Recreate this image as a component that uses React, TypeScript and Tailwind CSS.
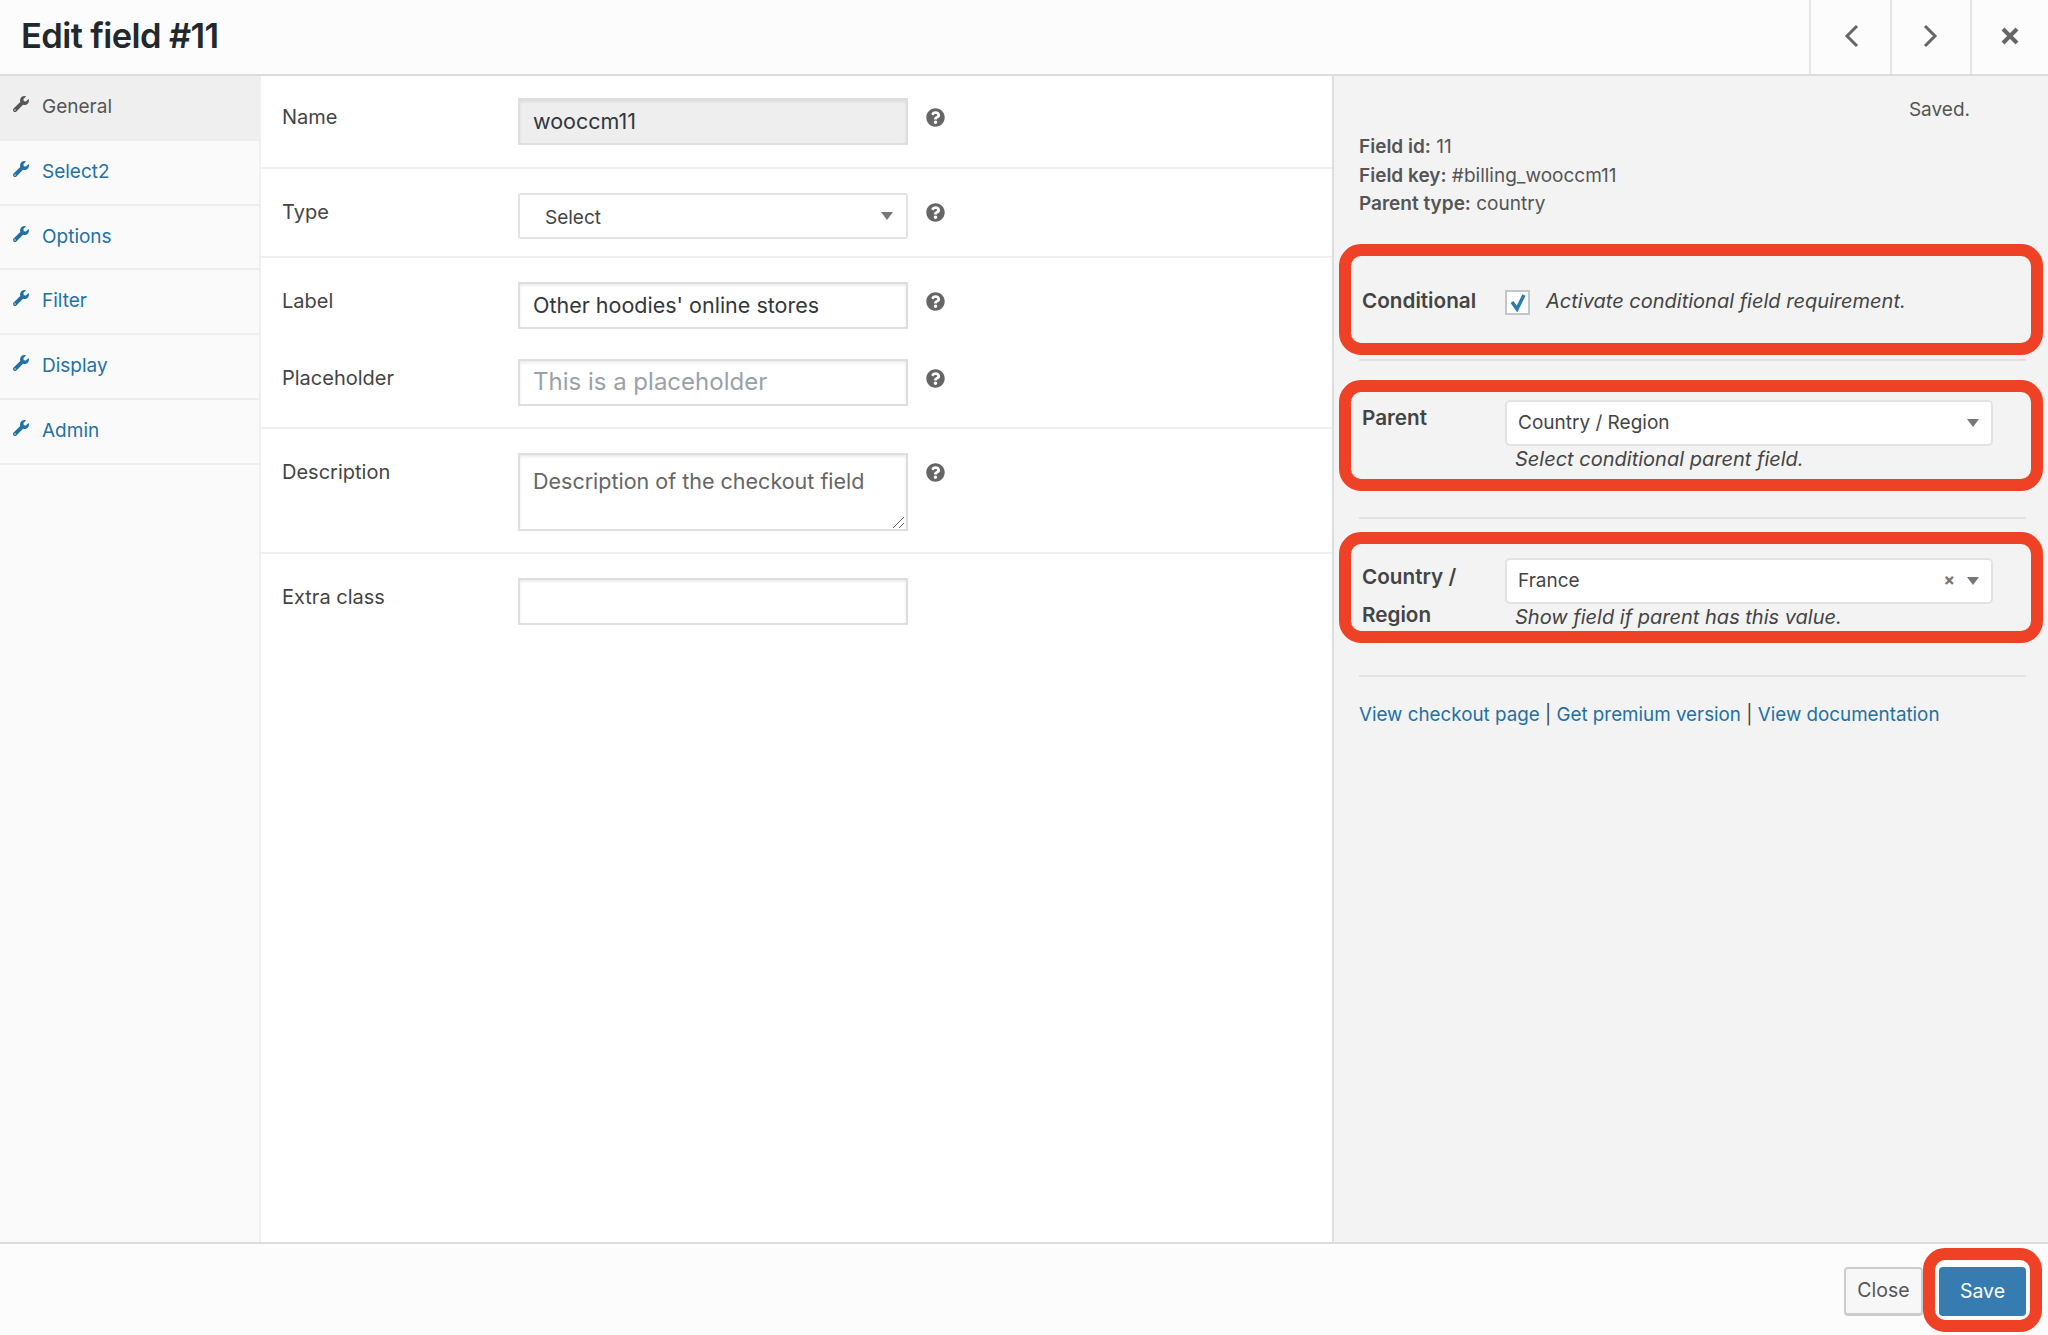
import { FaQuestionCircle, FaWrench } from "react-icons/fa";

const tabs = ["General", "Select2", "Options", "Filter", "Display", "Admin"];

function Help() {
  return (
    <div className="w-[20px] h-[39px] ml-[17px] flex items-center justify-center text-[#666]">
      <FaQuestionCircle size={19} />
    </div>
  );
}

function Label({ children }: { children: string }) {
  return <div className="w-[257px] pl-[21px] text-[20px] leading-[39px] text-[#444]">{children}</div>;
}

function Input({ value, className = "" }: { value?: string; className?: string }) {
  return (
    <div
      className={`w-[390px] h-[47px] border-2 border-[#dedede] shadow-[inset_0_2px_3px_rgba(0,0,0,0.08)] pl-[13px] text-[21.5px] leading-[42px] ${className}`}
    >
      {value}
    </div>
  );
}

function Arrow() {
  return <div className="w-0 h-0 border-x-[6px] border-x-transparent border-t-[8px] border-t-[#777]" />;
}

function RedBox({ className }: { className: string }) {
  return (
    <div className={`absolute border-[12px] border-[#ee4125] rounded-[22px] pointer-events-none ${className}`} />
  );
}

function ParentSelect({ value, clear }: { value: string; clear?: boolean }) {
  return (
    <div className="w-[488px] h-[46px] bg-white border-2 border-[#e2e2e2] rounded-[5px] flex items-center pl-[11px] pr-[12px] text-[19px] text-[#444]">
      <span className="flex-1 pt-[2px]">{value}</span>
      {clear && <span className="mr-[12px] text-[17px] font-bold text-[#777] leading-none">×</span>}
      <Arrow />
    </div>
  );
}

export default function App() {
  return (
    <div className="w-[2048px] h-[1335px] flex flex-col overflow-hidden bg-white font-['Inter',sans-serif] text-[19px] text-[#444]">
      <header className="h-[76px] shrink-0 flex justify-between bg-[#fcfcfc] border-b-2 border-[#dddddd]">
        <h1 className="pl-[21px] text-[34.5px] leading-[71px] font-semibold tracking-[-0.6px] text-[#23282d]">
          Edit field #11
        </h1>
        <div className="flex">
          <div className="w-[81px] pb-[3px] border-l-2 border-[#e6e6e6] flex items-center justify-center">
            <svg width="16" height="24" viewBox="0 0 16 24" fill="none" stroke="#666" strokeWidth="3">
              <path d="M14 2 L4 12 L14 22" />
            </svg>
          </div>
          <div className="w-[80px] pb-[3px] border-l-2 border-[#e6e6e6] flex items-center justify-center">
            <svg width="16" height="24" viewBox="0 0 16 24" fill="none" stroke="#666" strokeWidth="3">
              <path d="M2 2 L12 12 L2 22" />
            </svg>
          </div>
          <div className="w-[78px] pb-[3px] border-l-2 border-[#e6e6e6] flex items-center justify-center">
            <svg width="18" height="18" viewBox="0 0 18 18" fill="none" stroke="#666" strokeWidth="4">
              <path d="M2 2 L16 16 M16 2 L2 16" />
            </svg>
          </div>
        </div>
      </header>

      <main className="flex-1 flex min-h-0">
        <nav className="w-[261px] shrink-0 bg-[#fafafa] border-r-2 border-[#efefef]">
          {tabs.map((tab, i) => (
            <div
              key={tab}
              className={`h-[64.8px] flex items-start pl-[13px] pt-[20px] border-b-2 border-[#eeeeee] ${
                i === 0 ? "bg-[#efefef] text-[#555]" : "text-[#2271a5]"
              }`}
            >
              <FaWrench size={16} className="mr-[13px]" />
              <span className="leading-[24px] -mt-[1px]">{tab}</span>
            </div>
          ))}
        </nav>

        <section className="flex-1 bg-white">
          <div className="flex pt-[22px] h-[93px] border-b-2 border-[#f0f0f0]">
            <Label>Name</Label>
            <Input value="wooccm11" className="bg-[#eeeeee] text-[#32373c]" />
            <Help />
          </div>
          <div className="flex pt-[24px] h-[89px] border-b-2 border-[#f0f0f0]">
            <Label>Type</Label>
            <div className="w-[390px] h-[46px] border-2 border-[#e2e2e2] rounded-[3px] flex items-center pl-[25px] pr-[13px] text-[#444]">
              <span className="flex-1 pt-[5px]">Select</span>
              <Arrow />
            </div>
            <Help />
          </div>
          <div className="pt-[24px] h-[171px] border-b-2 border-[#f0f0f0]">
            <div className="flex">
              <Label>Label</Label>
              <Input value="Other hoodies' online stores" className="text-[#32373c]" />
              <Help />
            </div>
            <div className="flex mt-[30px]">
              <Label>Placeholder</Label>
              <Input value="This is a placeholder" className="text-[#9aa1a8] text-[24px]" />
              <Help />
            </div>
          </div>
          <div className="flex pt-[24px] h-[125px] border-b-2 border-[#f0f0f0]">
            <Label>Description</Label>
            <div className="relative w-[390px] h-[78px] border-2 border-[#dedede] shadow-[inset_0_2px_3px_rgba(0,0,0,0.08)] pl-[13px] pt-[11px] text-[21.5px] leading-[30px] text-[#666]">
              Description of the checkout field
              <svg className="absolute right-0 bottom-0" width="14" height="14" viewBox="0 0 14 14" stroke="#666" strokeWidth="1">
                <path d="M1 13 L12 2 M7 13 L12 8" />
              </svg>
            </div>
            <Help />
          </div>
          <div className="flex pt-[24px]">
            <Label>Extra class</Label>
            <Input />
          </div>
        </section>

        <aside className="w-[716px] shrink-0 bg-[#f3f3f3] border-l-2 border-[#dddddd] pl-[25px] pr-[22px] pt-[20px]">
          <div className="leading-[28px] text-right pr-[56px] text-[#555]">Saved.</div>
          <div className="mt-[9px] leading-[28.5px] text-[#555]">
            <div>
              <b className="font-semibold">Field id:</b> 11
            </div>
            <div>
              <b className="font-semibold">Field key:</b> #billing_wooccm11
            </div>
            <div>
              <b className="font-semibold">Parent type:</b> country
            </div>
          </div>

          <div className="relative mt-[25px] h-[117px] pt-[43px] border-b-2 border-[#e2e2e2]">
            <RedBox className="-left-[20px] -right-[17px] top-0 h-[111px]" />
            <div className="flex items-center h-[28px]">
              <div className="w-[146px] pl-[3px] text-[20.7px] font-semibold">Conditional</div>
              <div className="w-[25px] h-[25px] mt-[3px] bg-white border-2 border-[#c3c7cb] flex items-center justify-center">
                <svg width="20" height="20" viewBox="0 0 20 20" fill="none" stroke="#2b7ab0" strokeWidth="3.5">
                  <path d="M4 10 L9 17 L16 3" />
                </svg>
              </div>
              <i className="ml-[16px] text-[20px]">Activate conditional field requirement.</i>
            </div>
          </div>

          <div className="relative mt-[19px] h-[139px] pt-[20px] border-b-2 border-[#e2e2e2]">
            <RedBox className="-left-[20px] -right-[17px] top-0 h-[111px]" />
            <div className="flex">
              <div className="w-[146px] pl-[3px] text-[20.7px] font-semibold leading-[36px]">Parent</div>
              <div>
                <ParentSelect value="Country / Region" />
                <i className="block pl-[10px] text-[20px] leading-[26px]">Select conditional parent field.</i>
              </div>
            </div>
          </div>

          <div className="relative mt-[13px] h-[145px] pt-[26px] border-b-2 border-[#e2e2e2]">
            <RedBox className="-left-[20px] -right-[17px] top-0 h-[111px]" />
            <div className="flex">
              <div className="w-[146px] pl-[3px] pr-[30px] text-[20.7px] font-semibold leading-[38px]">Country / Region</div>
              <div>
                <ParentSelect value="France" clear />
                <i className="block pl-[10px] text-[20px] leading-[26px]">Show field if parent has this value.</i>
              </div>
            </div>
          </div>

          <div className="mt-[24px] leading-[28px] text-[18.8px]">
            <a className="text-[#2271a5]">View checkout page</a> | <a className="text-[#2271a5]">Get premium version</a>{" "}
            | <a className="text-[#2271a5]">View documentation</a>
          </div>
        </aside>
      </main>

      <footer className="h-[93px] shrink-0 bg-[#fcfcfc] border-t-2 border-[#dddddd] flex justify-end gap-[16px] pt-[23px] pr-[22px] text-[19.5px]">
        <div className="w-[79px] h-[49px] bg-[#f7f7f7] border-2 border-[#cccccc] border-b-[3px] rounded-[4px] flex items-center justify-center text-[#555]">
          Close
        </div>
        <div className="relative w-[87px] h-[49px] bg-[#377cb0] rounded-[4px] flex items-center justify-center text-white">
          Save
          <RedBox className="-left-[16px] -right-[16px] -top-[19px] -bottom-[16px]" />
        </div>
      </footer>
    </div>
  );
}
